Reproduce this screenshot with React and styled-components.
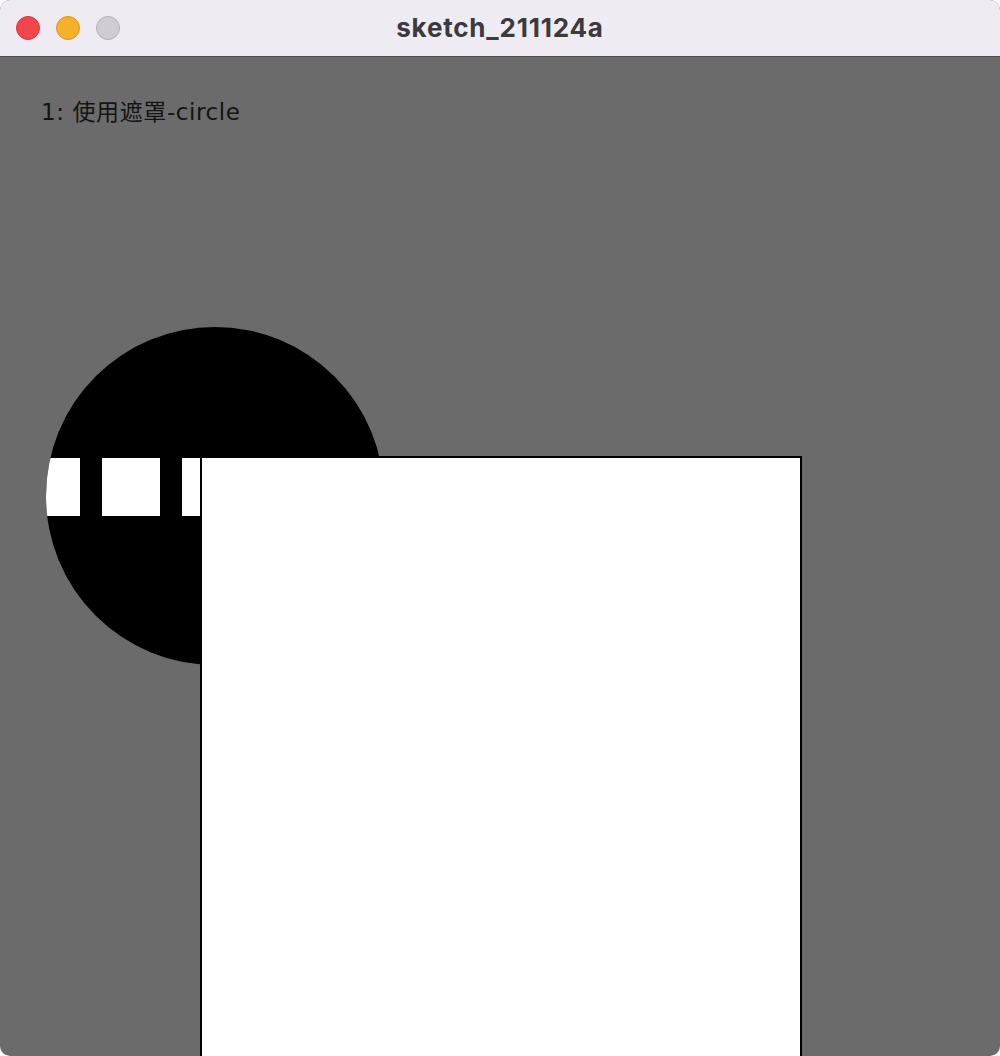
import React from "react";
import styled, { createGlobalStyle } from "styled-components";

const GlobalStyle = createGlobalStyle`
  html, body {
    margin: 0;
    padding: 0;
    background: #ffffff;
  }
`;

const Window = styled.div`
  width: 1000px;
  height: 1056px;
  display: flex;
  flex-direction: column;
  border-radius: 10px;
  overflow: hidden;
  background: #6b6b6b;
`;

const TitleBar = styled.div`
  height: 56px;
  flex: none;
  display: flex;
  align-items: center;
  padding-left: 16px;
  background: #eeebf2;
  border-bottom: 1px solid #4e4e4e;
`;

const Lights = styled.div`
  display: flex;
  gap: 16px;
`;

const Light = styled.span`
  width: 24px;
  height: 24px;
  border-radius: 50%;
  box-sizing: border-box;
  background: ${(p) => p.fill};
  border: 1px solid ${(p) => p.edge};
`;

const Title = styled.div`
  flex: 1;
  text-align: center;
  margin-right: 120px;
  padding-bottom: 1px;
  font-family: Inter, "Liberation Sans", sans-serif;
  font-weight: 700;
  font-size: 26px;
  letter-spacing: 0.8px;
  color: #3b3a3e;
`;

const Canvas = styled.svg`
  display: block;
  flex: 1;
  width: 1000px;
`;

const Label = styled.text`
  font-family: "DejaVu Sans", "Noto Sans CJK SC", sans-serif;
  font-size: 23px;
  letter-spacing: 0.6px;
  fill: #141414;
`;

const stripes = [0, 1, 2, 3, 4, 5].map((i) => 22 + i * 80);

export default function App() {
  return (
    <>
      <GlobalStyle />
      <Window>
        <TitleBar>
          <Lights>
            <Light fill="#f2464d" edge="#d8383e" />
            <Light fill="#f6b12a" edge="#dc9620" />
            <Light fill="#cfcdd2" edge="#b3b1b6" />
          </Lights>
          <Title>sketch_211124a</Title>
        </TitleBar>
        <Canvas viewBox="0 0 1000 999" preserveAspectRatio="xMinYMin slice">
          <defs>
            <clipPath id="mask">
              <circle cx="215" cy="439" r="169" />
            </clipPath>
          </defs>
          <Label x="41" y="63">1: 使用遮罩-circle</Label>
          <circle cx="215" cy="439" r="169" fill="#000" />
          <g clipPath="url(#mask)">
            {stripes.map((x) => (
              <rect key={x} x={x} y="401" width="58" height="58" fill="#fff" />
            ))}
          </g>
          <rect x="201" y="400" width="600" height="700" fill="#fff" stroke="#000" strokeWidth="2" />
        </Canvas>
      </Window>
    </>
  );
}
